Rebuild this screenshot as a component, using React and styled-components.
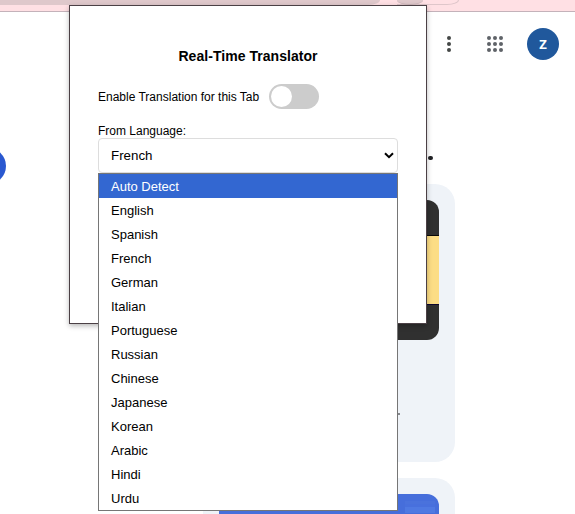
import React from 'react';
import styled, { createGlobalStyle } from 'styled-components';

const Global = createGlobalStyle`
  *, *::before, *::after { box-sizing: border-box; }
  body { margin: 0; background: #fff; overflow: hidden; font-family: "Liberation Sans", Arial, sans-serif; color: #000; }
`;

const Page = styled.div`
  position: relative;
  width: 575px;
  height: 514px;
  overflow: hidden;
  background: #fff;
`;

const BrowserBar = styled.div`
  display: flex;
  height: 12px;
  background: #ffe0e4;
  border-bottom: 1px solid #c4b2ba;
`;

const AddressField = styled.div`
  width: 380px;
  height: 5px;
  background: #dfc8cb;
  border-bottom-right-radius: 12px 5px;
`;

const ProfileChip = styled.div`
  width: 62px;
  height: 5px;
  margin-left: 17px;
  border: solid #dfc6ca;
  border-width: 0 1px 1px 0;
  border-bottom-right-radius: 12px 5px;
`;

const ChipAvatar = styled.div`
  width: 26px;
  height: 5px;
  background: #dfc8cb;
  border-bottom: 1px solid #cbb4b8;
  border-radius: 0 0 13px 13px / 0 0 5px 5px;
`;

const Header = styled.header`
  display: flex;
  align-items: center;
  justify-content: flex-end;
  height: 64px;
  padding-right: 16px;
`;

const Dots = styled.svg`
  display: block;
  fill: ${(p) => p.$tone};
  margin-right: ${(p) => p.$gap}px;
`;

const Account = styled.div`
  display: grid;
  place-items: center;
  width: 32px;
  height: 32px;
  border-radius: 50%;
  background: #20589c;
  color: #fff;
  font: 700 13px/32px "Open Sans", sans-serif;
`;

const Content = styled.main`
  display: grid;
  grid-template-columns: 203px 252px;
  grid-template-rows: 108px 572px;
`;

const StepCell = styled.div`
  padding-top: 72px;
`;

const StepCircle = styled.div`
  width: 36px;
  height: 36px;
  margin-left: -30px;
  border-radius: 50%;
  background: #2a58d0;
`;

const HeadingCell = styled.div`
  display: flex;
  justify-content: flex-end;
  padding: 80px 22px 0 0;
`;

const Period = styled.i`
  width: 5px;
  height: 4px;
  border-radius: 2px;
  background: #202124;
`;

const CardList = styled.div`
  display: flex;
  flex-direction: column;
  gap: 16px;
  grid-column: 2;
`;

const Card = styled.section`
  flex: none;
  height: 278px;
  padding: 16px;
  border-radius: 20px;
  background: #eff3f8;
`;

const DarkArt = styled.div`
  height: 140px;
  padding: 35px 0;
  border-radius: 12px;
  background: #303030;
`;

const YellowBand = styled.div`
  height: 70px;
  border: solid #080808;
  border-width: 1px 0;
  border-bottom-color: #0c0630;
  background: #fcdd85;
`;

const BlueArt = styled.div`
  display: flex;
  justify-content: flex-end;
  height: 140px;
  padding: 7px 4px;
  border-radius: 12px;
  background: #466edb;
`;

const BluePanel = styled.div`
  width: 30px;
  height: 12px;
  background: linear-gradient(#4a72dc 0 3px, #4870dd 3px 6px, #4f79e2 6px);
`;

const CardText = styled.div`
  display: flex;
  justify-content: flex-end;
  padding: 73px 39px 0 0;
`;

const TextEnd = styled.i`
  width: 4px;
  height: 2px;
  background: #85888c;
`;

const Popup = styled.section`
  position: absolute;
  left: 69px;
  top: 5px;
  width: 358px;
  height: 319px;
  padding: 41px 28px 0;
  border: 1px solid #4b4045;
  background: #fff;
  box-shadow: 0 2px 5px rgba(0, 0, 0, 0.28);
`;

const Title = styled.h1`
  margin: 0;
  font-size: 14px;
  line-height: 18px;
  letter-spacing: 0.04px;
  text-align: center;
`;

const ToggleRow = styled.div`
  display: flex;
  align-items: center;
  gap: 10px;
  height: 26px;
  margin-top: 18px;
  font-size: 12px;
  line-height: 16px;
  white-space: nowrap;
`;

const ToggleLabel = styled.span`
  padding-top: 1px;
`;

const Switch = styled.button`
  width: 50px;
  height: 25px;
  padding: 2px;
  border: 0;
  border-radius: 13px;
  background: #ccc;
`;

const Knob = styled.span`
  display: block;
  width: 21px;
  height: 21px;
  border-radius: 50%;
  background: #fff;
`;

const Field = styled.div`
  position: relative;
  margin-top: 15px;
`;

const Label = styled.div`
  height: 14px;
  font-size: 12px;
  line-height: 14px;
`;

const SelectBox = styled.div`
  display: flex;
  align-items: center;
  justify-content: space-between;
  height: 35px;
  padding: 0 3px 0 12px;
  border: 1px solid #ddd;
  border-radius: 4px;
  font-size: 13.333px;
`;

const Menu = styled.div`
  position: absolute;
  left: 0;
  right: 0;
  top: 100%;
  border: 1px solid #767676;
  background: #fff;
`;

const Option = styled.div`
  height: 24px;
  padding-left: 12px;
  background: ${(p) => (p.$active ? '#3367d1' : '#fff')};
  color: ${(p) => (p.$active ? '#fff' : '#000')};
  font-size: 13px;
  line-height: 25px;
`;

const languages = [
  'Auto Detect', 'English', 'Spanish', 'French', 'German', 'Italian', 'Portuguese',
  'Russian', 'Chinese', 'Japanese', 'Korean', 'Arabic', 'Hindi', 'Urdu',
];

const steps = [2, 8, 14];

export default function App() {
  return (
    <Page>
      <Global />
      <BrowserBar>
        <AddressField />
        <ProfileChip><ChipAvatar /></ProfileChip>
      </BrowserBar>
      <Header>
        <Dots $tone="#444746" $gap={36} width="4" height="16" viewBox="0 0 4 16">
          {steps.map((y) => <circle key={y} cx="2" cy={y} r="2" />)}
        </Dots>
        <Dots $tone="#5f6368" $gap={24} width="16" height="16" viewBox="0 0 16 16">
          {steps.map((y) => steps.map((x) => <circle key={`${x}-${y}`} cx={x} cy={y} r="2" />))}
        </Dots>
        <Account>Z</Account>
      </Header>
      <Content>
        <StepCell><StepCircle /></StepCell>
        <HeadingCell><Period /></HeadingCell>
        <CardList>
          <Card>
            <DarkArt><YellowBand /></DarkArt>
            <CardText><TextEnd /></CardText>
          </Card>
          <Card>
            <BlueArt><BluePanel /></BlueArt>
          </Card>
        </CardList>
      </Content>
      <Popup>
        <Title>Real-Time Translator</Title>
        <ToggleRow>
          <ToggleLabel>Enable Translation for this Tab</ToggleLabel>
          <Switch aria-label="Enable Translation for this Tab"><Knob /></Switch>
        </ToggleRow>
        <Field>
          <Label>From Language:</Label>
          <SelectBox>
            <span>French</span>
            <svg width="10" height="7" viewBox="0 0 10 7" fill="none" stroke="#000" strokeWidth="2">
              <path d="M1 1.2 L5 5.2 L9 1.2" />
            </svg>
          </SelectBox>
          <Menu>
            {languages.map((name, i) => <Option key={name} $active={i === 0}>{name}</Option>)}
          </Menu>
        </Field>
      </Popup>
    </Page>
  );
}
